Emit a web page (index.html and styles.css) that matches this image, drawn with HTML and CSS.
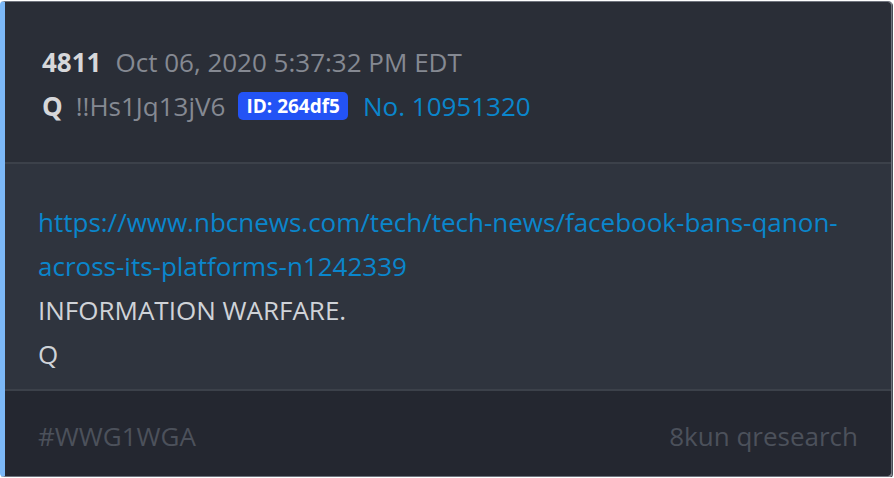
FILE: index.html
```html
<!DOCTYPE html>
<html>
<head>
<meta charset="utf-8">
<link rel="stylesheet" href="styles.css">
</head>
<body>
<div class="card">
  <div class="header">
    <div class="line"><span class="num">4811</span><span class="date">Oct 06, 2020 5:37:32 PM EDT</span></div>
    <div class="line"><span class="name">Q</span><span class="trip">!!Hs1Jq13jV6</span><span class="badge">ID: 264df5</span><span class="postno">No. 10951320</span></div>
  </div>
  <div class="body">
    <a class="link" href="#">https://www.nbcnews.com/tech/tech-news/facebook-bans-qanon-<br>across-its-platforms-n1242339</a>
    <div class="text">INFORMATION WARFARE.</div>
    <div class="text">Q</div>
  </div>
  <div class="footer">
    <span>#WWG1WGA</span>
    <span>8kun qresearch</span>
  </div>
</div>
</body>
</html>
```
FILE: styles.css
```css
html, body {
  margin: 0;
  padding: 0;
  background: #ffffff;
}
body {
  font-family: "Open Sans", "Noto Sans", sans-serif;
  font-size: 26px;
}
.card {
  width: 886px;
  margin: 1px 0 0 0;
  border: 1px solid #70747e;
  border-left: 5px solid #7cb8f7;
  border-radius: 4px;
  overflow: hidden;
  box-shadow: 1px 1px 0 #4a4e56;
}
.header {
  background: #2a2e37;
  padding: 38px 20px 34px 37px;
  border-bottom: 2px solid #3c414a;
}
.line {
  line-height: 44px;
  display: flex;
  align-items: center;
  white-space: nowrap;
}
.num {
  font-weight: 700;
  color: #d6d7da;
  margin-right: 14px;
}
.date {
  color: #858992;
}
.name {
  font-weight: 700;
  color: #d6d7da;
  margin-right: 13px;
}
.trip {
  color: #858992;
  margin-right: 13px;
}
.badge {
  background: #2353f5;
  color: #ffffff;
  font-weight: 700;
  font-size: 19px;
  line-height: 28px;
  padding: 0 8px;
  border-radius: 5px;
  margin-right: 15px;
}
.postno {
  color: #0a86cc;
}
.body {
  background: #2f343e;
  padding: 36px 20px 13px 33px;
  border-bottom: 2px solid #3c414a;
  line-height: 44px;
}
.link {
  color: #0a86cc;
  text-decoration: none;
}
.text {
  color: #d0d3d8;
}
.footer {
  background: #242730;
  display: flex;
  justify-content: space-between;
  padding: 23px 33px 18px 33px;
  line-height: 44px;
  color: #4c515b;
}
```
